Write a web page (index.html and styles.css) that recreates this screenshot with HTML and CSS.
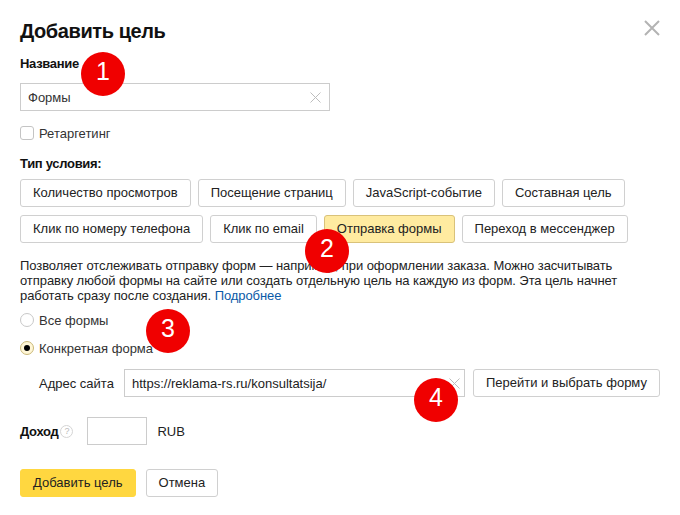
FILE: index.html
```html
<!DOCTYPE html>
<html>
<head>
<meta charset="utf-8" />
<title>Добавить цель</title>
<link rel="stylesheet" href="styles.css">
</head>
<body>
<div class="dialog">
 <svg class="closeIcon" width="16" height="16" viewBox="0 0 16 16"><path d="M1 1L15 15M15 1L1 15" stroke="#b3b3b3" stroke-width="2" fill="none"/></svg>
 <h1 class="title">Добавить цель</h1>
 <div class="label nameLabel">Название</div>
 <div class="input nameInput">
  <span>Формы</span>
  <svg width="11" height="11" viewBox="0 0 11 11"><path d="M0.5 0.5L10.5 10.5M10.5 0.5L0.5 10.5" stroke="#bdbdbd" stroke-width="1" fill="none"/></svg>
 </div>
 <div class="option retarget"><span class="check"></span>Ретаргетинг</div>
 <div class="label typeLabel">Тип условия:</div>
 <div class="btnRow">
  <div class="btn">Количество просмотров</div>
  <div class="btn">Посещение страниц</div>
  <div class="btn">JavaScript-событие</div>
  <div class="btn">Составная цель</div>
 </div>
 <div class="btnRow">
  <div class="btn">Клик по номеру телефона</div>
  <div class="btn">Клик по email</div>
  <div class="btn btnActive">Отправка формы</div>
  <div class="btn">Переход в мессенджер</div>
 </div>
 <p class="descr">Позволяет отслеживать отправку форм — например, при оформлении заказа. Можно засчитывать<br>отправку любой формы на сайте или создать отдельную цель на каждую из форм. Эта цель начнет<br>работать сразу после создания. <a href="#">Подробнее</a></p>
 <div class="option allForms"><span class="radio"></span>Все формы</div>
 <div class="option oneForm"><span class="radio radioOn"></span>Конкретная форма</div>
 <div class="siteRow">
  <span class="siteLabel">Адрес сайта</span>
  <div class="input siteInput">
   <span>https://reklama-rs.ru/konsultatsija/</span>
   <svg width="11" height="11" viewBox="0 0 11 11"><path d="M0.5 0.5L10.5 10.5M10.5 0.5L0.5 10.5" stroke="#bdbdbd" stroke-width="1" fill="none"/></svg>
  </div>
  <div class="btn">Перейти и выбрать форму</div>
 </div>
 <div class="incomeRow">
  <span class="label">Доход</span>
  <span class="help">?</span>
  <div class="input incomeInput"></div>
  <span>RUB</span>
 </div>
 <div class="footer">
  <div class="btn btnMain">Добавить цель</div>
  <div class="btn">Отмена</div>
 </div>
 <div class="badge badge1">1</div>
 <div class="badge badge2">2</div>
 <div class="badge badge3">3</div>
 <div class="badge badge4">4</div>
</div>
</body>
</html>
```
FILE: styles.css
```css
html, body { margin:0; padding:0; background:#fff; }
.dialog {
position:relative; box-sizing:border-box; width:680px; height:515px; padding:20px 20px 0;
font-family:"Liberation Sans", sans-serif; font-size:13px; color:#222; overflow:hidden;
}
.closeIcon { position:absolute; left:644px; top:20px; }
.title { margin:0; font-size:20px; line-height:23px; font-weight:bold; color:#111; letter-spacing:-0.42px; }
.label { font-weight:bold; color:#111; letter-spacing:-0.3px; }
.nameLabel { margin-top:13px; line-height:16px; }
.input {
box-sizing:border-box; height:28px; border:1px solid #ccc; background:#fff;
display:flex; align-items:center; justify-content:space-between; padding:0 8px 0 7px;
}
.nameInput { width:310px; margin-top:11px; color:#333; }
.option { display:flex; align-items:center; height:16px; color:#333; }
.retarget { margin-top:14px; }
.check { box-sizing:border-box; width:14px; height:14px; border:1px solid #c4c4c4; border-radius:3px; margin-right:5px; }
.typeLabel { margin-top:15px; line-height:16px; }
.btnRow { display:flex; gap:7px; margin-top:8px; }
.typeLabel + .btnRow { margin-top:7px; }
.btn {
box-sizing:border-box; height:28px; line-height:25px; padding:0 12px; border:1px solid #d0d0d0;
border-radius:3px; background:#fff; color:#222; white-space:nowrap;
}
.btnActive { background:#ffeba0; border-color:#d9c27a; }
.descr { margin:15px 0 0; line-height:15px; color:#222; letter-spacing:-0.07px; }
.descr a { color:#0a5aa8; text-decoration:none; }
.allForms { margin-top:9px; }
.oneForm { margin-top:12px; }
.radio { box-sizing:border-box; width:14px; height:14px; border:1px solid #c8c8c8; border-radius:50%; margin-right:5px; }
.radioOn { border:1px solid #c9b878; background:#fff6d6; position:relative; }
.radioOn::after { content:""; position:absolute; left:3px; top:3px; width:6px; height:6px; border-radius:50%; background:#000; }
.siteRow { display:flex; align-items:center; margin-top:13px; padding-left:19px; }
.siteLabel { width:85px; flex:none; white-space:nowrap; }
.siteInput { width:341px; flex:none; margin-right:8px; padding-right:4px; }
.incomeRow { display:flex; align-items:center; margin-top:20px; }
.help {
box-sizing:border-box; width:13px; height:13px; margin-left:2px; border:1px solid #d5d5d5; border-radius:50%;
font-size:9px; line-height:11px; text-align:center; color:#bbb;
}
.incomeInput { width:60px; margin:0 10px 0 14px; }
.footer { display:flex; gap:10px; margin-top:24px; }
.btnMain { background:#ffd740; border-color:#ffd740; }
.badge {
position:absolute; width:44px; height:44px; border-radius:50%; background:#f00000; color:#fff;
font-size:25px; line-height:39px; text-align:center;
}
.badge1 { left:81px; top:52px; }
.badge2 { left:305px; top:229px; }
.badge3 { left:146px; top:309px; }
.badge4 { left:414px; top:378px; }
```
